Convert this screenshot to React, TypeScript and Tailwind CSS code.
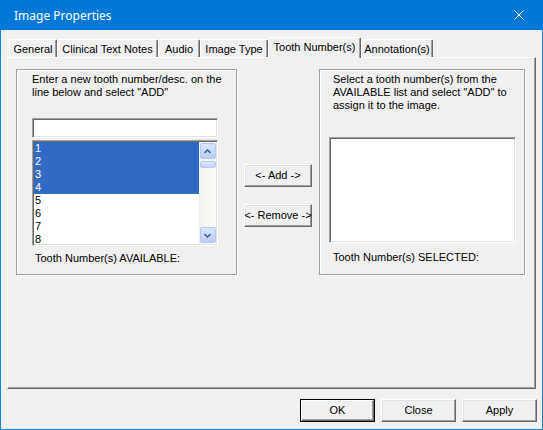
import React from "react";

const Tab = ({ label, w, active }: { label: string; w: string; active?: boolean }) =>
  active ? (
    <div
      className={`${w} h-[21px] -mb-px relative z-10 bg-[#f0f0f0] border-t border-l border-r border-t-white border-l-white border-r-[#696969] rounded-t-[2px] shadow-[inset_-1px_0_0_#a0a0a0] flex items-start justify-center pt-[3px] leading-[13px] whitespace-nowrap`}
    >
      {label}
    </div>
  ) : (
    <div
      className={`${w} h-[18px] bg-[#f0f0f0] border-t border-l border-r border-t-white border-l-white border-r-[#696969] rounded-t-[2px] shadow-[inset_-1px_0_0_#a0a0a0] flex items-start justify-center pt-[3px] leading-[13px] whitespace-nowrap`}
    >
      {label}
    </div>
  );

const Btn = ({ label, w, h, isDefault }: { label: string; w: string; h: string; isDefault?: boolean }) =>
  isDefault ? (
    <div className={`${w} ${h} border border-black flex`}>
      <div className="flex-1 bg-[#f0f0f0] border border-t-white border-l-white border-r-[#696969] border-b-[#696969] shadow-[inset_-1px_-1px_0_#a0a0a0] flex items-center justify-center whitespace-nowrap">
        {label}
      </div>
    </div>
  ) : (
    <div
      className={`${w} ${h} bg-[#f0f0f0] border border-t-white border-l-white border-r-[#696969] border-b-[#696969] shadow-[inset_-1px_-1px_0_#a0a0a0,inset_1px_1px_0_#e3e3e3] flex items-center justify-center whitespace-nowrap`}
    >
      {label}
    </div>
  );

const Chevron = ({ up }: { up?: boolean }) => (
  <svg width="7" height="5" viewBox="0 0 7 5">
    <path
      d={up ? "M0.5 4L3.5 1L6.5 4" : "M0.5 1L3.5 4L6.5 1"}
      stroke="#4d6185"
      strokeWidth="1.6"
      fill="none"
    />
  </svg>
);

const ScrollBtn = ({ up }: { up?: boolean }) => (
  <div className="h-[16px] w-[16px] rounded-[2px] border border-[#b5c9f5] bg-gradient-to-b from-[#dce6fd] to-[#b9cdfb] flex items-center justify-center">
    <Chevron up={up} />
  </div>
);

export default function App() {
  const items = Array.from({ length: 8 }, (_, i) => String(i + 1));
  return (
    <div className="w-[543px] h-[430px] bg-[#1883d7] px-px pb-px flex flex-col font-['Liberation_Sans',Arial,sans-serif] text-[11px] leading-[13px] text-black overflow-hidden">
      <div className="h-[30px] shrink-0 bg-[#0078d7] -mx-px flex items-center justify-between">
        <span className="pl-[14px] text-white text-[12px] font-['Noto_Sans',sans-serif]">Image Properties</span>
        <svg className="mr-[19px]" width="10" height="10" viewBox="0 0 10 10">
          <path d="M0.5 0.5L9.5 9.5M9.5 0.5L0.5 9.5" stroke="white" strokeWidth="1" />
        </svg>
      </div>
      <div className="flex-1 bg-[#f0f0f0] flex flex-col">
        <div className="h-[27px] flex items-end pl-[8px]">
          <Tab label="General" w="w-[48px]" />
          <Tab label="Clinical Text Notes" w="w-[101px]" />
          <Tab label="Audio" w="w-[42px]" />
          <Tab label="Image Type" w="w-[68px]" />
          <Tab label="Tooth Number(s)" w="w-[93px]" active />
          <Tab label="Annotation(s)" w="w-[72px]" />
        </div>
        <div className="ml-[6px] mr-[6px] h-[332px] border border-t-white border-l-white border-r-[#696969] border-b-[#696969] shadow-[inset_-1px_-1px_0_#a0a0a0] pl-[8px] pt-[11px] flex items-start">
          {/* Left group */}
          <div className="w-[221px] h-[206px] border border-[#a0a0a0] shadow-[inset_1px_1px_0_#fff,1px_1px_0_#fff] pl-[15px] pt-[3px] flex flex-col">
            <div>Enter a new tooth number/desc. on the</div>
            <div>line below and select "ADD"</div>
            <div className="mt-[19px] w-[186px] h-[20px] bg-white border border-t-[#a0a0a0] border-l-[#a0a0a0] border-r-white border-b-white shadow-[inset_1px_1px_0_#696969,inset_-1px_-1px_0_#e3e3e3]" />
            <div className="mt-[2px] w-[186px] h-[106px] bg-white border border-t-[#a0a0a0] border-l-[#a0a0a0] border-r-white border-b-white shadow-[inset_1px_1px_0_#696969,inset_-1px_-1px_0_#e3e3e3] p-px flex">
              <div className="flex-1">
                {items.map((n, i) => (
                  <div
                    key={n}
                    className={
                      i < 4
                        ? "h-[13px] bg-[#316ac5] text-white pl-px"
                        : "h-[13px] pl-px"
                    }
                  >
                    {n}
                  </div>
                ))}
              </div>
              <div className="w-[17px] bg-gradient-to-r from-[#f3f1ec] to-[#fefefb] flex flex-col items-center pt-px pb-px">
                <ScrollBtn up />
                <div className="mt-[2px] h-[7px] w-[16px] rounded-[2px] border border-[#b5c9f5] bg-gradient-to-b from-[#dce6fd] to-[#c3d4fc]" />
                <div className="flex-1" />
                <ScrollBtn />
              </div>
            </div>
            <div className="mt-[6px] pl-[3px]">Tooth Number(s) AVAILABLE:</div>
          </div>

          {/* Middle buttons */}
          <div className="ml-[7px] pt-[95px] flex flex-col gap-[17px]">
            <Btn label="<- Add ->" w="w-[68px]" h="h-[23px]" />
            <Btn label="<- Remove ->" w="w-[68px]" h="h-[23px]" />
          </div>

          {/* Right group */}
          <div className="ml-[7px] w-[206px] h-[206px] border border-[#a0a0a0] shadow-[inset_1px_1px_0_#fff,1px_1px_0_#fff] pl-[9px] pt-[3px] flex flex-col">
            <div className="pl-[4px]">Select a tooth number(s) from the</div>
            <div className="pl-[4px]">AVAILABLE list and select "ADD" to</div>
            <div className="pl-[4px]">assign it to the image.</div>
            <div className="mt-[25px] w-[187px] h-[106px] bg-white border border-t-[#a0a0a0] border-l-[#a0a0a0] border-r-white border-b-white shadow-[inset_1px_1px_0_#696969,inset_-1px_-1px_0_#e3e3e3]" />
            <div className="mt-[8px] pl-[4px]">Tooth Number(s) SELECTED:</div>
          </div>
        </div>
        <div className="flex justify-end gap-[6px] pr-[5px] pt-[10px]">
          <Btn label="OK" w="w-[75px]" h="h-[23px]" isDefault />
          <Btn label="Close" w="w-[75px]" h="h-[23px]" />
          <Btn label="Apply" w="w-[75px]" h="h-[23px]" />
        </div>
      </div>
    </div>
  );
}
